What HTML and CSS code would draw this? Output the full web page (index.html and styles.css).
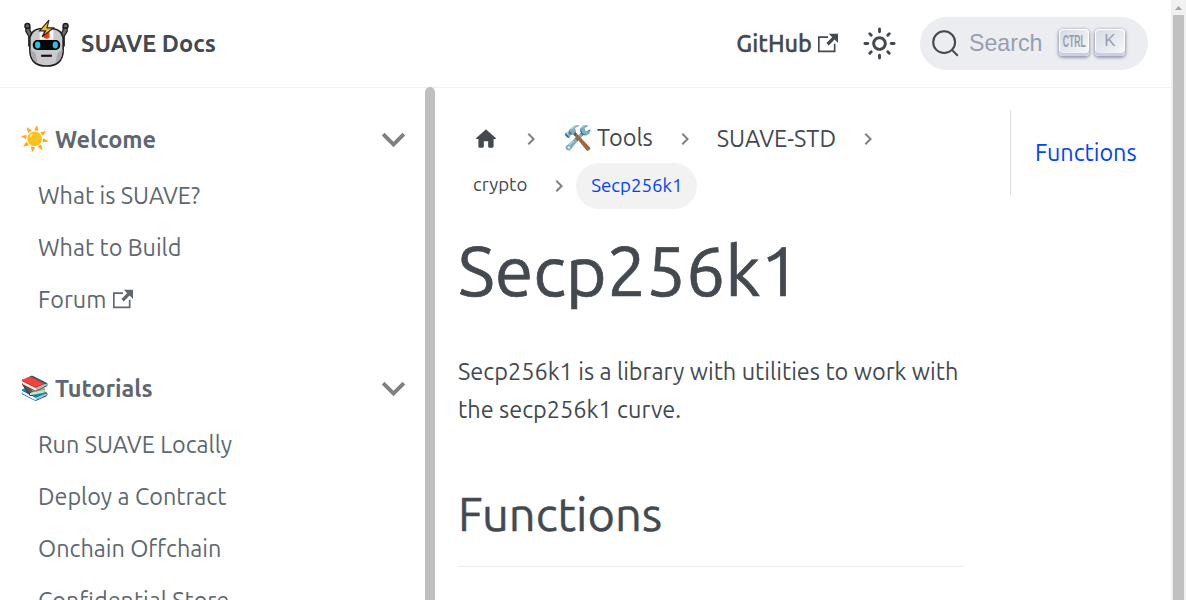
FILE: index.html
```html
<!DOCTYPE html>
<html lang="en">
<head>
<meta charset="utf-8">
<title>Secp256k1 | SUAVE Docs</title>
<link rel="stylesheet" href="styles.css">
</head>
<body>
<svg class="defs" width="0" height="0">
  <symbol id="external" viewBox="0 0 24 24"><path fill="currentColor" d="M21 13v10h-21v-19h12v2h-10v15h17v-8h2zm3-12h-10.988l4.035 4-6.977 7.07 2.828 2.828 6.977-7.07 4.125 4.172v-11z"/></symbol>
  <symbol id="chevron" viewBox="0 0 24 24"><path d="M7.41 15.41L12 10.83l4.59 4.58L18 14l-6-6-6 6z"/></symbol>
</svg>
<div class="window">
  <div class="page">
    <nav class="navbar">
      <svg class="logo" viewBox="0 0 48 52">
        <path d="M8 28V17L5 12V8M40 28V17l3-5V8" fill="none" stroke="#1c1d1f" stroke-width="5.500"/>
        <path d="M8 28V17L5 12V8M40 28V17l3-5V8" fill="none" stroke="#66686b" stroke-width="3"/>
        <circle cx="4.500" cy="7" r="2.500" fill="#626366" stroke="#1c1d1f" stroke-width="1.500"/>
        <circle cx="43.500" cy="7" r="2.500" fill="#626366" stroke="#1c1d1f" stroke-width="1.500"/>
        <path d="M7 19q2-8 10-9h14q8 1 10 9v14q-1 15-17 15Q8 48 7 33z" fill="#c9cacc" stroke="#1c1d1f" stroke-width="1.600"/>
        <path d="M7.800 31l5 4 2 10Q8 42 7.800 33zM40.200 31l-5 4-2 10q7-3 7-12z" fill="#a9aaad"/>
        <path d="M17 11h14v10H17z" fill="#f7f7f7"/><path d="M21 11h6v8q-3 2-6 0z" fill="#ec3c17"/>
        <rect x="10" y="21.500" width="28" height="10" rx="4.500" fill="#050607"/>
        <ellipse cx="15" cy="26.500" rx="2.700" ry="3.500" fill="#29bfea"/><ellipse cx="33" cy="26.500" rx="2.700" ry="3.500" fill="#29bfea"/>
        <path d="M18.500 37.500h11" stroke="#111" stroke-width="2.200"/>
        <path d="M26.500 1L17 12h6l-3.500 6L31 9h-6.500z" fill="#ffb92d" stroke="#302519" stroke-width="1.200"/>
      </svg>
      <b class="brand">SUAVE Docs</b>
      <a class="github"><span>GitHub</span><svg class="ext"><use href="#external"/></svg></a>
      <svg class="sun" viewBox="0 0 24 24"><path fill="currentColor" d="M12,9c1.65,0,3,1.35,3,3s-1.35,3-3,3s-3-1.35-3-3S10.35,9,12,9 M12,7c-2.76,0-5,2.24-5,5s2.24,5,5,5s5-2.240,5-5S14.760,7,12,7L12,7z M2,13l2,0c0.55,0,1-0.450,1-1s-0.450-1-1-1l-2,0c-0.550,0-1,0.450-1,1S1.450,13,2,13z M20,13l2,0c0.550,0,1-0.450,1-1s-0.450-1-1-1l-2,0c-0.550,0-1,0.450-1,1S19.450,13,20,13z M11,2v2c0,0.550,0.450,1,1,1s1-0.450,1-1V2c0-0.550-0.450-1-1-1S11,1.450,11,2z M11,20v2c0,0.550,0.450,1,1,1s1-0.450,1-1v-2c0-0.550-0.450-1-1-1S11,19.450,11,20z"/><path d="M5.300 5.300l1.050 1.050M17.650 17.650l1.050 1.050M5.300 18.700l1.050-1.050M17.650 6.350l1.050-1.050" stroke="currentColor" stroke-width="2" stroke-linecap="round"/></svg>
      <div class="search">
        <svg class="glass" viewBox="0 0 20 20"><path d="M14.386 14.386l4.088 4.088-4.088-4.088c-2.942 2.942-7.711 2.942-10.653 0s-2.942-7.711 0-10.653 7.711-2.942 10.653 0 2.942 7.711 0 10.653z" stroke="currentColor" fill="none" stroke-width="1.400"/></svg>
        <span class="placeholder">Search</span>
        <kbd class="ctrl"><i>CTRL</i></kbd><kbd>K</kbd>
      </div>
    </nav>
    <div class="body">
      <aside class="sidebar">
        <h4><i class="emoji">☀️</i><span>Welcome</span><svg class="caret"><use href="#chevron"/></svg></h4>
        <ul>
          <li>What is SUAVE?</li>
          <li>What to Build</li>
          <li><span>Forum</span><svg class="ext"><use href="#external"/></svg></li>
        </ul>
        <h4><i class="emoji">📚</i><span>Tutorials</span><svg class="caret"><use href="#chevron"/></svg></h4>
        <ul>
          <li>Run SUAVE Locally</li>
          <li>Deploy a Contract</li>
          <li>Onchain Offchain</li>
          <li>Confidential Store</li>
        </ul>
      </aside>
      <div class="sidebar-bar"></div>
      <main>
        <div class="crumbs">
          <svg class="home" viewBox="0 0 24 24"><path d="M10 19v-5h4v5c0 .55.45 1 1 1h3c.55 0 1-.45 1-1v-7h1.700c.46 0 .68-.57.33-.87L12.670 3.600c-.38-.34-.96-.34-1.340 0l-8.360 7.530c-.34.300-.13.870.330.870H5v7c0 .55.45 1 1 1h3c.55 0 1-.45 1-1z" fill="currentColor"/></svg>
          <svg class="sep s1"><use href="#chevron"/></svg>
          <span class="label"><i class="emoji">🛠️</i>Tools</span>
          <svg class="sep s2"><use href="#chevron"/></svg>
          <span class="label">SUAVE-STD</span>
          <svg class="sep s3"><use href="#chevron"/></svg>
        </div>
        <div class="crumbs small">
          <span class="label crypto">crypto</span>
          <svg class="sep s4"><use href="#chevron"/></svg>
          <span class="pill">Secp256k1</span>
        </div>
        <h1>Secp256k1</h1>
        <p>Secp256k1 is a library with utilities to work with<br>the secp256k1 curve.</p>
        <h2>Functions</h2>
      </main>
      <div class="toc"><a>Functions</a></div>
    </div>
  </div>
  <div class="scrollbar"><div class="arrow"></div><div class="thumb"></div></div>
</div>
</body>
</html>
```
FILE: styles.css
```css
* { box-sizing: border-box; }
body { margin: 0; background: #fff; color: #444950; font-family: Ubuntu, "Noto Sans", sans-serif; font-size: 23.5px; overflow: hidden; }
.defs { position: absolute; }
i { font-style: normal; }
svg { flex: none; fill: currentColor; }
.window { display: flex; height: 600px; overflow: hidden; }
.page { width: 1171px; flex: none; }
.navbar { height: 88px; display: flex; align-items: center; padding: 0 23px 0; border-bottom: 1px solid #f1f1f1; }
.logo { width: 47px; height: 51px; margin-top: 1px; }
.brand { margin-left: 11px; padding-bottom: 2px; font-size: 23.6px; }
.github { margin-left: auto; display: flex; align-items: center; font-weight: 500; -webkit-text-stroke: 0.35px currentColor; }
.github span { padding-bottom: 2px; }
.github .ext { margin-left: 6px; margin-bottom: 1px; }
.ext { width: 20px; height: 20px; margin-left: 7px; }
.sun { width: 35px; height: 35px; margin-left: 24px; }
.search { display: flex; align-items: center; width: 228px; height: 53px; margin-left: 23px; padding-left: 11px; border-radius: 27px; background: #ebedf0; }
.glass { width: 29px; height: 29px; }
.placeholder { width: 73px; font-family: "Liberation Sans", sans-serif; font-size: 23.2px; color: #969faf; margin: 0 17px 0 9px; }
kbd { width: 30px; height: 27px; margin: -2px 6px 0 0; border-radius: 4px; display: flex; align-items: center; justify-content: center; font: 17px "Liberation Sans", sans-serif; color: #969faf; background: linear-gradient(-225deg, #d5dbe4, #f8f8f8); box-shadow: inset 0 -3px 0 #cdcde6, inset 0 0 1px 1px #fff, 0 1px 3px 1px rgba(30,35,90,.4); padding-bottom: 4px; }
.ctrl i { font-size: 16px; font-weight: bold; transform: scaleX(.54); }
.ctrl { padding-bottom: 2px; }
.body { display: flex; height: 512px; }
.sidebar { width: 425px; padding: 26px 0 0 21px; color: #606770; }
.sidebar h4 { margin: 0; height: 50px; display: flex; align-items: center; font-size: 23.5px; }
.emoji { display: inline-block; width: 34px; font-weight: 400; }
.sidebar .emoji { margin-left: -1px; width: 35px; }
.caret { width: 47px; height: 47px; margin: 0 8px 0 auto; transform: rotate(180deg); color: #808080; }
.sidebar ul { list-style: none; margin: 5px 0 38px; padding: 0 0 0 17px; font-size: 23.4px; }
.sidebar li { height: 52px; display: flex; align-items: center; }
.sidebar-bar { width: 10px; border-radius: 5px 5px 0 0; background: #bfbfbf; margin-top: -1px; }
main { width: 529px; padding: 26px 0 0 23px; }
.crumbs { height: 50px; display: flex; align-items: center; }
.label { padding-bottom: 3px; }
.home { width: 26px; height: 26px; margin-left: 15px; }
.sep { width: 24px; height: 24px; transform: rotate(90deg); color: #808080; }
.s1 { margin: 0 20px 0 20px; }
.s2 { margin: 0 20px; }
.s3 { margin-left: 20px; }
.s4 { margin: 0 5px 0 20px; }
.small { font-size: 18.7px; height: 44px; }
.crypto { margin-left: 15px; }
.pill { height: 46px; width: 121px; padding-bottom: 2px; display: flex; align-items: center; justify-content: center; background: #f2f2f2; border-radius: 23px; color: #0042ff; }
h1 { margin: 19px 0 0; font-size: 70px; line-height: 86px; font-weight: 400; white-space: nowrap; -webkit-text-stroke: 0.7px currentColor; }
p { margin: 39px 0 0; line-height: 38px; white-space: nowrap; }
h2 { margin: 56px 0 0; font-size: 47px; line-height: 60px; height: 83px; font-weight: 400; width: 506px; border-bottom: 1px solid #ebedf0; -webkit-text-stroke: 0.4px currentColor; }
.toc { margin: 22px 0 0 46px; height: 85px; border-left: 1px solid #dadde1; padding: 0 0 1px 24px; display: flex; align-items: center; font-size: 23.4px; color: #0042ff; }
.scrollbar { width: 15px; background: #f1f1f1; padding: 0 2px; }
.arrow { width: 7px; height: 4px; margin: 6px 2px 5px; background: #a3a3a3; clip-path: polygon(50% 0, 100% 100%, 0 100%); }
.thumb { height: 590px; background: #c1c1c1; }
```
